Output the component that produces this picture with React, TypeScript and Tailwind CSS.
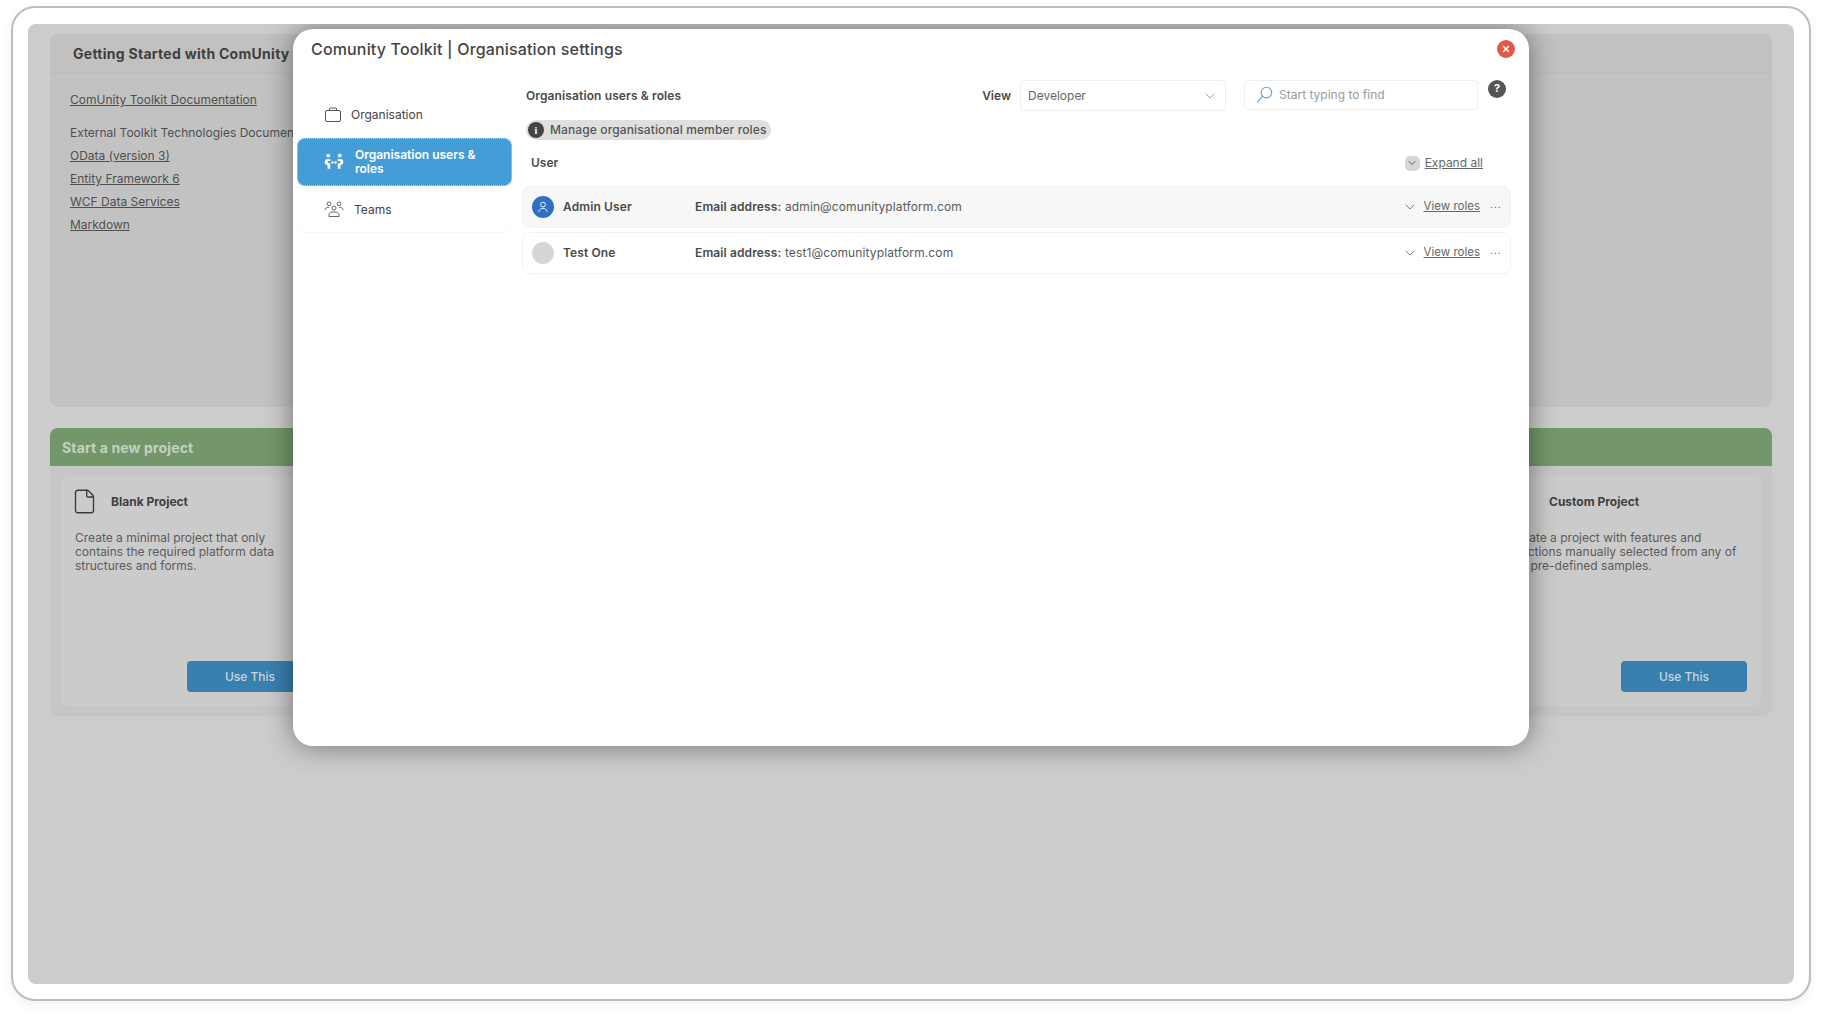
import { ChevronDown, File, X } from 'lucide-react';

const links = ['OData (version 3)', 'Entity Framework 6', 'WCF Data Services', 'Markdown'];

function BriefcaseIcon() {
  return (
    <svg width="18" height="16" viewBox="0 0 18 16" fill="none" stroke="#555" strokeWidth="1">
      <rect x="1.5" y="3.5" width="15" height="11" rx="1.5" />
      <path d="M5.5 3.5V2a1 1 0 0 1 1-1h5a1 1 0 0 1 1 1v1.5" />
    </svg>
  );
}

function MembersIcon() {
  return (
    <svg width="20" height="20" viewBox="0 0 18 18" fill="#fff" stroke="none">
      <circle cx="3.8" cy="3.2" r="1.7" />
      <circle cx="14.2" cy="3.2" r="1.7" />
      <path d="M2 6.6h3.8v1.6H4.2q-1 0-1 1t1 1h1.4V15H3.2v-3.2Q.6 11.4.6 9 .6 7 2 6.6z" />
      <path d="M16 6.6h-3.8v1.6h1.6q1 0 1 1t-1 1h-1.4V15h2.4v-3.2q2.6-.4 2.6-2.8 0-2-1.4-2.4z" />
      <path d="M6.6 9.4h4.8M6.6 9.4l1.3-1.2M6.6 9.4l1.3 1.2M11.4 9.4l-1.3-1.2M11.4 9.4l-1.3 1.2" stroke="#fff" strokeWidth="0.9" fill="none" />
    </svg>
  );
}

function TeamsIcon() {
  return (
    <svg width="20" height="17" viewBox="0 0 20 17" fill="none" stroke="#555" strokeWidth="0.9">
      <circle cx="5" cy="2.8" r="1.9" />
      <circle cx="15" cy="2.8" r="1.9" />
      <circle cx="10" cy="7" r="2" />
      <path d="M.8 9c.4-2 2-2.8 4.2-2.6M19.2 9c-.4-2-2-2.8-4.2-2.6" />
      <path d="M5 15.5v-1.6c0-2 2-3 5-3s5 1 5 3v1.6z" />
    </svg>
  );
}

function SearchIcon() {
  return (
    <svg width="17" height="18" viewBox="0 0 16 17" fill="none" stroke="#5aa5dc" strokeWidth="1">
      <circle cx="9.8" cy="6.2" r="5" />
      <path d="M6.2 9.8 1 15.5" />
    </svg>
  );
}

function UserIcon() {
  return (
    <svg width="12" height="12" viewBox="0 0 12 12" fill="none" stroke="#fff" strokeWidth="0.9">
      <circle cx="6" cy="3.6" r="2.4" />
      <path d="M1.8 11c.2-2.3 1.9-3.6 4.2-3.6s4 1.3 4.2 3.6" />
    </svg>
  );
}

function ProjectCard({ title, lines, icon, titleGap }: { title: string; lines: string[]; icon: React.ReactNode; titleGap: string }) {
  return (
    <div className="w-[266px] h-[230px] bg-[#cbcbcb] rounded-[8px] px-[14px] pt-[14px] pb-[14px] flex flex-col">
      <div className={`flex items-center h-[23px] ${titleGap}`}>
        {icon}
        <span className="text-[12px] font-bold text-[#3f3f3f]">{title}</span>
      </div>
      <div className="mt-[18px] text-[12px] leading-[14px] text-[#5c5c5c]">
        {lines.map((l) => (
          <div key={l} className="whitespace-nowrap">{l}</div>
        ))}
      </div>
      <button className="mt-auto self-end w-[126px] h-[31px] rounded-[4px] bg-[#3880ae] text-[#c9d6df] text-[12px] font-medium">
        Use This
      </button>
    </div>
  );
}

function UserRow({ name, email, active, avatar }: { name: string; email: string; active?: boolean; avatar: React.ReactNode }) {
  return (
    <div className={`h-[42px] rounded-[8px] border border-[#f2f2f2] flex items-center pl-[9px] pr-[8px] ${active ? 'bg-[#f7f7f7]' : 'bg-white'}`}>
      {avatar}
      <span className="ml-[9px] w-[132px] text-[12px] font-semibold tracking-[0.01em] text-[#4a4a4a]">{name}</span>
      <span className="text-[12px] tracking-[0.01em] text-[#5a5a5a]">
        <b className="font-semibold text-[#4a4a4a]">Email address:</b> {email}
      </span>
      <ChevronDown size={16} strokeWidth={1.1} className="ml-auto text-[#555]" />
      <a className="ml-[6px] text-[11.5px] text-[#666] underline">View roles</a>
      <span className="ml-[10px] w-[12px] text-[10px] leading-none text-[#555] tracking-[1px] pb-[6px]">...</span>
    </div>
  );
}

export default function App() {
  return (
    <div className="w-[1822px] h-[1016px] bg-white overflow-hidden pt-[6px] pl-[11px] font-[Inter,sans-serif]">
      <div className="w-[1800px] h-[995px] rounded-[24px] border-2 border-[#bdbdbd] shadow-[0_4px_12px_rgba(0,0,0,0.06)] bg-white pt-[16px] pl-[15px]">
        {/* dimmed page behind the dialog */}
        <div className="relative w-[1766px] h-[960px] rounded-[8px] bg-[#cccccc] overflow-hidden px-[22px] pt-[10px] flex flex-col gap-[21px]">
          <section className="h-[373px] rounded-[8px] bg-[#c2c2c2] overflow-hidden">
            <div className="h-[39px] bg-[#c3c1bf] border-b border-[#bdbcba] flex items-center pl-[23px]">
              <h2 className="text-[14px] font-bold tracking-[0.02em] text-[#3f3f3f] whitespace-nowrap">Getting Started with ComUnity Toolkit</h2>
            </div>
            <div className="pl-[20px] pt-[18px] text-[12px] leading-[17px] text-[#4f4f4f]">
              <a className="underline block">ComUnity Toolkit Documentation</a>
              <div className="mt-[16px] whitespace-nowrap">External Toolkit Technologies Documentation</div>
              <div className="mt-[6px] flex flex-col gap-[6px]">
                {links.map((l) => (
                  <a key={l} className="underline block">{l}</a>
                ))}
              </div>
            </div>
          </section>

          <section className="h-[288px] rounded-[8px] bg-[#c6c6c6] overflow-hidden">
            <div className="h-[38px] bg-[#73976b] flex items-center pl-[12px]">
              <h2 className="text-[14px] font-bold tracking-[0.01em] text-[#c4d0c0]">Start a new project</h2>
            </div>
            <div className="flex justify-between px-[11px] pt-[10px]">
              <ProjectCard
                title="Blank Project"
                titleGap="gap-[13px]"
                icon={<File size={27} strokeWidth={1.2} className="-ml-[4px] text-[#3a3a3a]" />}
                lines={['Create a minimal project that only', 'contains the required platform data', 'structures and forms.']}
              />
              <ProjectCard
                title="Custom Project"
                titleGap="gap-[20px]"
                icon={
                  <svg width="20" height="20" viewBox="0 0 20 20" stroke="#3a3a3a" strokeWidth="1.2">
                    <path d="M17 4h3M17 10h3M17 16h3" />
                  </svg>
                }
                lines={['Create a project with features and', 'functions manually selected from any of', 'the pre-defined samples.']}
              />
            </div>
          </section>

          {/* dialog */}
          <div className="absolute left-[265px] top-[5px] w-[1236px] h-[717px] bg-white rounded-[20px] shadow-[0_0_28px_rgba(0,0,0,0.45)] flex flex-col">
            <div className="flex items-start justify-between h-[61px] pl-[18px] pr-[14px] pt-[10px]">
              <h1 className="text-[16px] leading-[20px] font-medium tracking-[0.01em] text-[#444]">Comunity Toolkit | Organisation settings</h1>
              <button className="mt-[1px] w-[18px] h-[18px] rounded-full bg-[#e05a47] flex items-center justify-center">
                <X size={10} strokeWidth={3.5} className="text-white" />
              </button>
            </div>

            <div className="flex flex-1 pl-[4px] pr-[18px]">
              <nav className="w-[215px] shrink-0">
                <div className="h-[48px] rounded-[8px] border-b border-[#f6f6f6] flex items-center pl-[27px] gap-[9px] pt-[2px] text-[12px] text-[#444]">
                  <BriefcaseIcon />
                  Organisation
                </div>
                <div className="h-[48px] rounded-[8px] border border-dotted border-[#bcdcf2] bg-[#459dd8] flex items-center pl-[26px] gap-[11px] text-[12px] leading-[14px] font-semibold text-white">
                  <MembersIcon />
                  <span className="w-[130px]">Organisation users &amp; roles</span>
                </div>
                <div className="h-[47px] rounded-[8px] border-b border-[#f6f6f6] flex items-center pl-[27px] gap-[10px] pt-[1px] text-[12px] text-[#444]">
                  <TeamsIcon />
                  Teams
                </div>
              </nav>

              <main className="flex-1 ml-[10px]">
                <div className="flex items-center h-[31px] -mt-[10px] pl-[4px]">
                  <span className="text-[12px] font-semibold tracking-[0.01em] text-[#4a4a4a]">Organisation users &amp; roles</span>
                  <span className="ml-auto text-[12px] font-semibold text-[#4a4a4a]">View</span>
                  <div className="ml-[9px] w-[206px] h-[31px] rounded-[4px] border border-[#eeeeee] flex items-center justify-between pl-[7px] pr-[7px] text-[12px] text-[#666]">
                    Developer
                    <ChevronDown size={16} strokeWidth={1} className="text-[#777]" />
                  </div>
                  <div className="ml-[18px] -mt-[2px] w-[234px] h-[30px] rounded-[4px] border border-[#eeeeee] flex items-center pl-[11px] gap-[6px] text-[12px] text-[#9a9a9a]">
                    <SearchIcon />
                    Start typing to find
                  </div>
                  <div className="ml-[10px] mr-[5px] -mt-[14px] w-[18px] h-[18px] rounded-full bg-[#555] text-white text-[11px] font-bold flex items-center justify-center">?</div>
                </div>

                <div className="mt-[9px] ml-[4px] w-fit h-[20px] rounded-full bg-[#e0dfdd] flex items-center pl-[2px] pr-[5px] gap-[6px] text-[12px] tracking-[0.01em] font-medium text-[#555]">
                  <span className="w-[16px] h-[16px] rounded-full bg-[#444] text-white text-[10px] font-bold font-[Liberation_Serif,serif] flex items-center justify-center">i</span>
                  Manage organisational member roles
                </div>

                <div className="flex items-center h-[20px] mt-[13px] pl-[9px] pr-[28px]">
                  <span className="text-[12px] font-semibold text-[#4a4a4a]">User</span>
                  <span className="ml-auto w-[15px] h-[15px] rounded-[5px] bg-[#d6d6d6] flex items-center justify-center">
                    <ChevronDown size={12} strokeWidth={1.5} className="text-[#333]" />
                  </span>
                  <a className="ml-[5px] text-[12px] text-[#666] underline">Expand all</a>
                </div>

                <div className="mt-[13px] flex flex-col gap-[4px]">
                  <UserRow
                    active
                    name="Admin User"
                    email="admin@comunityplatform.com"
                    avatar={
                      <span className="w-[22px] h-[22px] rounded-full bg-[#2f6fc4] flex items-center justify-center">
                        <UserIcon />
                      </span>
                    }
                  />
                  <UserRow
                    name="Test One"
                    email="test1@comunityplatform.com"
                    avatar={<span className="w-[22px] h-[22px] rounded-full bg-[#d6d6d6]" />}
                  />
                </div>
              </main>
            </div>
          </div>
        </div>
      </div>
    </div>
  );
}
